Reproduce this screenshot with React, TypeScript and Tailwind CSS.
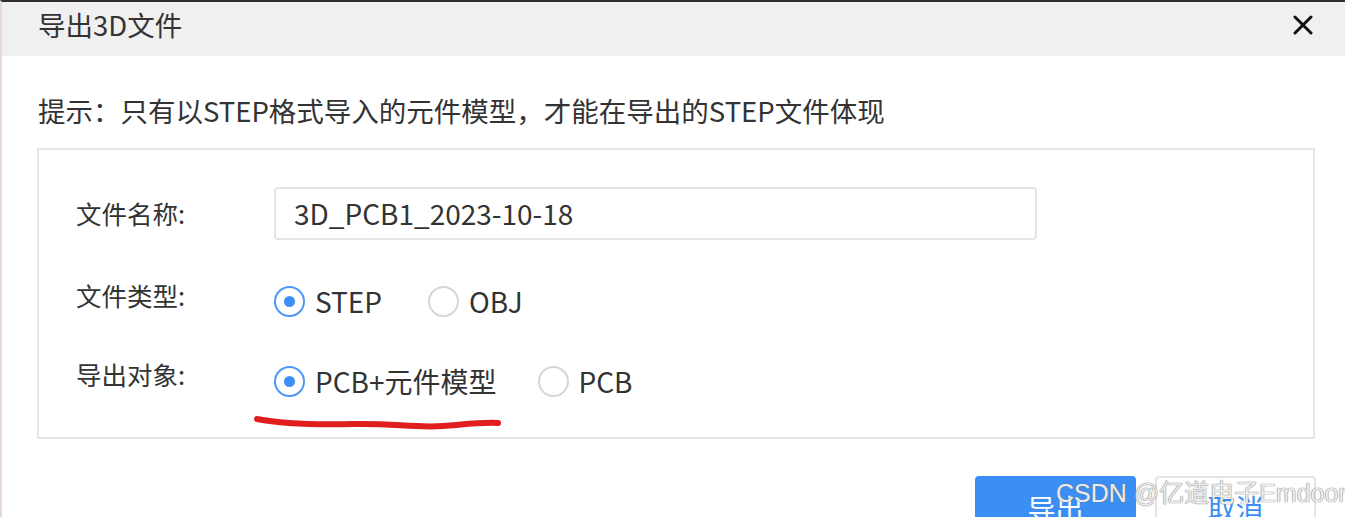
import React from "react";

const font = { fontFamily: '"Noto Sans CJK SC", "Noto Sans", sans-serif' };

function Radio({ checked, label }: { checked?: boolean; label: string }) {
  return (
    <div className="flex items-center">
      <div
        className={
          checked
            ? "w-[31px] h-[31px] rounded-full border-2 border-[#4a98f7] bg-white flex items-center justify-center"
            : "w-[31px] h-[31px] rounded-full border-2 border-[#d6d6d6] bg-white"
        }
      >
        {checked && <div className="w-[11px] h-[11px] rounded-full bg-[#3a8ef6]" />}
      </div>
      <span className="ml-[10px] text-[28px] leading-none text-[#333]">{label}</span>
    </div>
  );
}

export default function App() {
  return (
    <div
      className="relative w-[1345px] h-[517px] overflow-hidden bg-white border-t-2 border-t-[#2e2e2e] border-l-2 border-l-[#e6d8da]"
      style={font}
    >
      <div className="h-[54px] bg-[#f0f0f0] flex items-center justify-between pl-[36px] pr-[32px] pb-[8px]">
        <span className="text-[27.5px] text-[#333] leading-none">导出3D文件</span>
        <svg width="20" height="20" viewBox="0 0 20 20">
          <path d="M2 2 L18 18 M18 2 L2 18" stroke="#111" strokeWidth="3" strokeLinecap="round" />
        </svg>
      </div>
      <div className="pl-[36px] pt-[41px] text-[27.5px] leading-none text-[#333] whitespace-nowrap">
        提示：只有以STEP格式导入的元件模型，才能在导出的STEP文件体现
      </div>
      <div className="ml-[35px] mt-[23px] w-[1278px] h-[291px] border-2 border-[#e6e6e6] relative">
        <div className="flex items-center mt-[37px] ml-[37px]">
          <span className="w-[198px] text-[25.5px] text-[#333] leading-none">文件名称:</span>
          <div className="w-[763px] h-[53px] rounded-[4px] border-2 border-[#e4e4e4] flex items-center pl-[18px] text-[28px] text-[#333]">
            3D_PCB1_2023-10-18
          </div>
        </div>
        <div className="flex items-center mt-[33px] ml-[37px]">
          <span className="w-[198px] text-[25.5px] text-[#333] leading-none">文件类型:</span>
          <div className="flex items-center gap-[46px] mt-[13px]">
            <Radio checked label="STEP" />
            <Radio label="OBJ" />
          </div>
        </div>
        <div className="flex items-center mt-[35px] ml-[37px]">
          <span className="w-[198px] text-[25.5px] text-[#333] leading-none">导出对象:</span>
          <div className="flex items-center gap-[41px] mt-[14px]">
            <Radio checked label="PCB+元件模型" />
            <Radio label="PCB" />
          </div>
        </div>
        <svg className="absolute left-[214px] top-[264px]" width="250" height="20" viewBox="0 0 250 20">
          <path
            d="M4 5 C 30 10, 60 11, 100 10 C 140 9, 160 14, 190 12 C 215 10, 230 8, 245 9"
            stroke="#e01e1e"
            strokeWidth="6"
            fill="none"
            strokeLinecap="round"
          />
        </svg>
      </div>
      <div className="flex justify-end gap-[19px] pr-[29px] mt-[37px]">
        <div className="w-[161px] h-[50px] rounded-[4px] bg-[#3a8ef6] flex items-start justify-center pt-[18px] text-[28px] text-white leading-none">
          导出
        </div>
        <div className="w-[161px] h-[50px] rounded-[4px] border-2 border-[#e4e4e4] bg-white flex items-start justify-center pt-[16px] text-[28px] text-[#3a8ef6] leading-none">
          取消
        </div>
      </div>
      <div
        className="absolute left-[1054px] top-[479px] text-[25px] leading-none text-[#ececec] whitespace-nowrap"
        style={{ textShadow: "0 0 1px #777, 0 0 1px #777", fontFamily: '"Liberation Sans", "Noto Sans CJK SC", sans-serif' }}
      >
        CSDN @亿道电子Emdoor
      </div>
    </div>
  );
}
